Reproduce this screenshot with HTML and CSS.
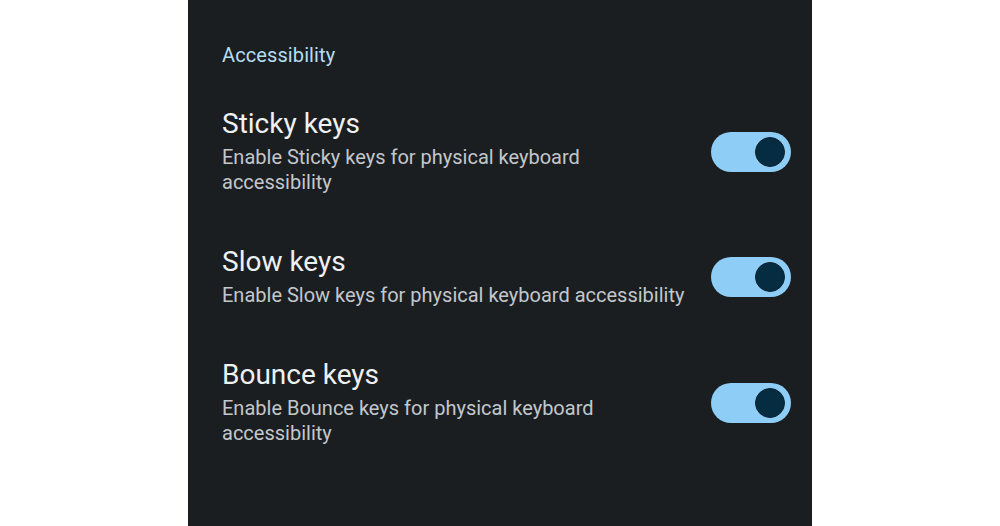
FILE: index.html
```html
<!DOCTYPE html>
<html>
<head>
<meta charset="utf-8">
<link rel="stylesheet" href="styles.css">
</head>
<body>
<div class="panel">
  <div class="section-title">Accessibility</div>
  <div class="list">
    <div class="row">
      <div class="text">
        <div class="title">Sticky keys</div>
        <div class="sub">Enable Sticky keys for physical keyboard<br>accessibility</div>
      </div>
      <div class="switch"><div class="thumb"></div></div>
    </div>
    <div class="row">
      <div class="text">
        <div class="title">Slow keys</div>
        <div class="sub">Enable Slow keys for physical keyboard accessibility</div>
      </div>
      <div class="switch"><div class="thumb"></div></div>
    </div>
    <div class="row">
      <div class="text">
        <div class="title">Bounce keys</div>
        <div class="sub">Enable Bounce keys for physical keyboard<br>accessibility</div>
      </div>
      <div class="switch"><div class="thumb"></div></div>
    </div>
  </div>
</div>
</body>
</html>
```
FILE: styles.css
```css
html, body {
  margin: 0;
  padding: 0;
  background: #ffffff;
}
body {
  font-family: Roboto, "Noto Sans", sans-serif;
}
.panel {
  margin-left: 188px;
  width: 624px;
  height: 526px;
  background: #1b1e21;
  box-sizing: border-box;
  padding: 43px 21px 0 34px;
}
.section-title {
  color: #b4def3;
  font-size: 20px;
  line-height: 24px;
  font-weight: 400;
  letter-spacing: 0.1px;
}
.list {
  margin-top: 41px;
  display: flex;
  flex-direction: column;
  gap: 51px;
}
.row {
  display: flex;
  align-items: center;
  justify-content: space-between;
}
.title {
  color: #eef0f2;
  font-size: 28px;
  line-height: 32px;
}
.sub {
  margin-top: 5px;
  color: #c3c7cb;
  font-size: 20px;
  line-height: 25px;
}
.switch {
  width: 80px;
  height: 40px;
  border-radius: 20px;
  background: #8ecdf5;
  display: flex;
  align-items: center;
  justify-content: flex-end;
  padding-right: 6px;
  box-sizing: border-box;
  flex-shrink: 0;
}
.thumb {
  width: 30px;
  height: 30px;
  border-radius: 50%;
  background: #062c42;
  border: 1px solid #0b2232;
  box-sizing: border-box;
}
```
